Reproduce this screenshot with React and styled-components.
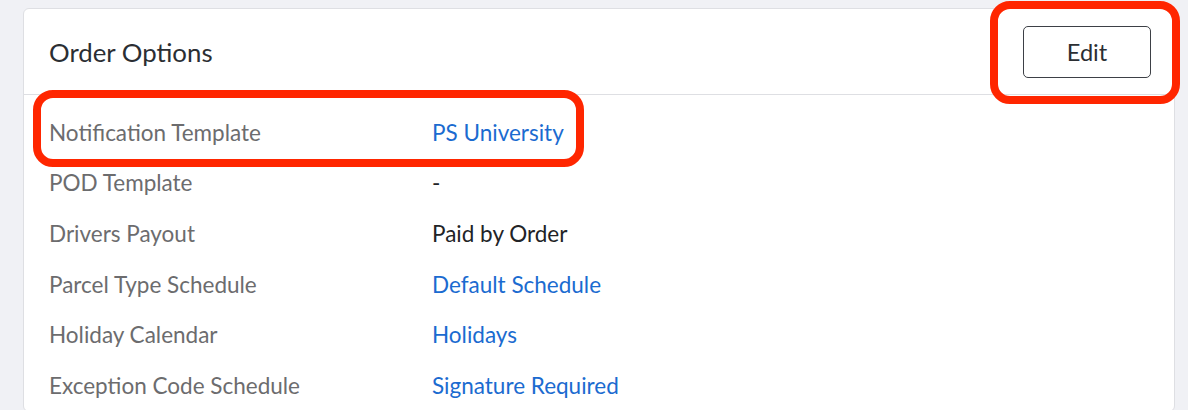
import React from 'react';
import styled, { createGlobalStyle } from 'styled-components';

const GlobalStyle = createGlobalStyle`
    html, body {
        margin: 0;
        padding: 0;
        background-color: #f0f1f5;
        font-family: Lato, "Open Sans", sans-serif;
    }
`;

const Page = styled.div`
    position: relative;
    padding: 8px 0 0 23px;
    height: 410px;
    box-sizing: border-box;
    overflow: hidden;
`;

const Card = styled.div`
    width: 1152px;
    background-color: #fff;
    border: 1px solid #dedfe3;
    border-radius: 6px;
    box-sizing: border-box;
`;

const Header = styled.div`
    display: flex;
    align-items: center;
    justify-content: space-between;
    height: 86px;
    padding: 0 23px 0 25px;
    border-bottom: 1px solid #dedfe3;
    box-sizing: border-box;
`;

const Title = styled.h2`
    margin: 0;
    font-size: 25.8px;
    font-weight: 400;
    color: #2b2e33;
`;

const EditButton = styled.button`
    width: 128px;
    height: 52px;
    background: #fff;
    border: 1px solid #3d4046;
    border-radius: 5px;
    font-family: inherit;
    font-size: 23.6px;
    color: #2b2e33;
    cursor: pointer;
`;

const Body = styled.div`
    padding: 12px 25px 0;
`;

const Row = styled.div`
    display: grid;
    grid-template-columns: 383px 1fr;
    align-items: center;
    height: 50.6px;
    font-size: 22.5px;
`;

const Label = styled.span`
    color: #6c6c6e;
`;

const Value = styled.span`
    color: ${({ $link }) => ($link ? '#1b6bd0' : '#222326')};
`;

const Highlight = styled.div`
    position: absolute;
    border: 8px solid #ff2600;
    border-radius: 20px;
    box-sizing: border-box;
    pointer-events: none;
`;

const rows = [
    { label: 'Notification Template', value: 'PS University', link: true },
    { label: 'POD Template', value: '-' },
    { label: 'Drivers Payout', value: 'Paid by Order' },
    { label: 'Parcel Type Schedule', value: 'Default Schedule', link: true },
    { label: 'Holiday Calendar', value: 'Holidays', link: true },
    { label: 'Exception Code Schedule', value: 'Signature Required', link: true },
];

const App = () => {
    return (
        <>
            <GlobalStyle />
            <Page>
                <Card>
                    <Header>
                        <Title>Order Options</Title>
                        <EditButton>Edit</EditButton>
                    </Header>
                    <Body>
                        {rows.map((row) => (
                            <Row key={row.label}>
                                <Label>{row.label}</Label>
                                <Value $link={row.link}>{row.value}</Value>
                            </Row>
                        ))}
                    </Body>
                </Card>
                {/* annotation outlines */}
                <Highlight style={{ left: 990, top: 1, width: 190, height: 103 }} />
                <Highlight style={{ left: 33, top: 90, width: 551, height: 77 }} />
            </Page>
        </>
    );
};

export default App;
